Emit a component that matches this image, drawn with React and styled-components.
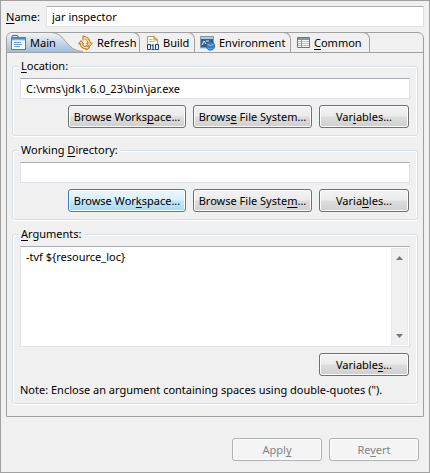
import React from "react";
import styled, { createGlobalStyle, css } from "styled-components";

const GlobalStyle = createGlobalStyle`
  *, *::before, *::after { box-sizing: border-box; }
  body {
    margin: 0;
    background: #f0f0f0;
    color: #000;
    font: 11px/16px "Noto Sans", "Open Sans", sans-serif;
  }
  button, input, textarea { font: inherit; color: inherit; }
`;

const Dialog = styled.form`
  display: flex;
  flex-direction: column;
  min-height: 100vh;
  padding: 5px;
  border: 1px solid #a0a0a0;
  background: #f0f0f0;
`;

const NameRow = styled.div`
  display: flex;
  align-items: center;
  gap: 4px;
`;

const NameLabel = styled.label`
  min-width: 36px;
`;

const field = css`
  border: 1px solid #e2e3ea;
  border-top-color: #abadb3;
  border-right-color: #dbdfe6;
  background: #fff;
  outline: none;
`;

const TextField = styled.input`
  ${field}
  display: block;
  flex: 1;
  width: 100%;
  min-width: 0;
  height: 21px;
  padding: 0 5px;
`;

const Key = styled.span`
  text-decoration: underline;
  text-decoration-skip-ink: none;
  text-decoration-thickness: 1px;
  text-underline-offset: 2px;
`;

const Folder = styled.section`
  margin-top: 5px;
  border: 1px solid #a0a0a0;
  border-radius: 6px 6px 0 0;
`;

const TabList = styled.div`
  display: flex;
  height: 20px;
  border-bottom: 1px solid #a0a0a0;
`;

const Tab = styled.button`
  display: flex;
  align-items: center;
  gap: 4px;
  width: ${(p) => p.$width}px;
  margin-top: -1px;
  padding: 1px 0 0 ${(p) => p.$inset}px;
  border: 0 solid #a0a0a0;
  border-width: 1px 1px 0 0;
  border-top-right-radius: 7px;
  background: none;
  white-space: nowrap;

  & svg { flex: none; }
`;

const ActiveTab = styled(Tab)`
  position: relative;
  border-color: transparent;
`;

const TabShape = styled.svg`
  position: absolute;
  left: 0;
  top: -1px;
`;

const TabFace = styled.span`
  position: relative;
  display: flex;
  align-items: center;
  gap: 4px;
`;

const Panel = styled.div`
  display: flex;
  flex-direction: column;
  gap: 6px;
  padding: 5px 5px 12px;
`;

const Group = styled.fieldset`
  min-width: 0;
  margin: 0;
  padding: 4px 7px 7px;
  border: 1px solid #d5dfe5;
  border-radius: 3px;
  box-shadow: inset 1px 1px #fff, inset -1px 0 #fff, 0 1px #fff;
`;

const Legend = styled.legend`
  padding: 0 2px;
  margin-left: -1px;
  background: #f0f0f0;
`;

const ButtonRow = styled.div`
  display: flex;
  justify-content: flex-end;
  gap: 7px;
  margin: 6px 1px 0 0;
`;

const PushButton = styled.button`
  width: ${(p) => p.$width || 90}px;
  height: 23px;
  padding: 0;
  border: 1px solid #707070;
  border-radius: 3px;
  background: linear-gradient(#f2f2f2, #ebebeb 48%, #dddddd 52%, #cfcfcf);
  box-shadow: inset 0 0 0 1px #fcfcfc;
  white-space: nowrap;

  ${(p) =>
    p.$hot &&
    css`
      border-color: #3c7fb1;
      background: linear-gradient(#eaf6fd, #d9f0fc 48%, #bee6fd 52%, #a7d9f5);
    `}

  &:disabled {
    border-color: #adb2b5;
    background: #f4f4f4;
    color: #838383;
  }
`;

const ArgumentsBox = styled.div`
  ${field}
  display: flex;
  height: 101px;
  padding: 1px;
`;

const ArgumentsInput = styled.textarea`
  flex: 1;
  min-width: 0;
  padding: 1px 4px;
  border: 0;
  outline: none;
  resize: none;
  overflow: hidden;
  background: transparent;
`;

const ScrollTrack = styled.div`
  display: flex;
  flex-direction: column;
  justify-content: space-between;
  width: 17px;
  border: 1px solid #e9e9e9;
  background: #f0f0f0;
`;

const ScrollButton = styled.button`
  display: grid;
  place-items: center;
  height: 17px;
  padding: 0;
  border: 0;
  background: none;
`;

const Note = styled.p`
  margin: 7px 0 0;
  line-height: 13px;
`;

const Footer = styled.footer`
  display: flex;
  justify-content: flex-end;
  gap: 7px;
  margin: 21px 5px 6px 0;
`;

const MainIcon = () => (
  <svg width="15" height="16" viewBox="0 0 15 16" aria-hidden="true">
    <path d="M1 3V1.500Q1 .5 2 .5h4q1 0 1 1V3" fill="#dcecf8" stroke="#3a6fa4" />
    <path d="M.5 2.500h14v12H.5z" fill="#f4f9fd" stroke="#5b7896" />
    <path d="M1 3h13v2H1z" fill="#4f91cb" />
    <path d="M1 5h13" stroke="#a9cde9" />
    <path d="M3 7.500h7M3 9.500h8M3 11.500h6" stroke="#6f9cc4" />
  </svg>
);

const RefreshIcon = () => (
  <svg width="15" height="16" viewBox="0 0 15 16" aria-hidden="true" fill="none" strokeLinejoin="round">
    <path d="M6 2.800Q10.300 3 11.300 8" stroke="#b47716" strokeWidth="3" />
    <path d="M5 5.500V.7L9 3M8.500 8h5.800l-3 3.800z" fill="#fbdc8b" stroke="#b47716" />
    <path d="M6 2.800Q10.300 3 11.300 8.800" stroke="#fbdc8b" strokeWidth="1.400" />
    <path d="M3.200 9Q4 13 9 12.600" stroke="#b47716" strokeWidth="3" />
    <path d="M.6 9h5.200L3 5.600zM8 10.300v4.800l3.600-2.500z" fill="#fbdc8b" stroke="#b47716" />
    <path d="M3.200 8.500Q4 13 9 12.600" stroke="#fbdc8b" strokeWidth="1.400" />
  </svg>
);

const BuildIcon = () => (
  <svg width="12" height="15" viewBox="0 0 12 15" aria-hidden="true">
    <path d="M.5 9V.5H7l3.500 3.500V9" fill="#fffdf4" stroke="#b79b50" />
    <path d="M7 .5V4h3.500z" fill="#e8c978" stroke="#b79b50" />
    <path d="M2.500 3.500h3M2.500 5.500h5" stroke="#9eb5d1" />
    <path d="M0 7.500h12V15H0z" fill="#e8edf3" />
    <path d="M.5 8.500h3v5h-3zM8.500 8.500" fill="none" stroke="#1d4476" />
    <path d="M6 8v6M4.500 9.500H6M4.500 13.500h3M8.500 8.500h3v5h-3z" fill="none" stroke="#1d4476" />
  </svg>
);

const EnvironmentIcon = () => (
  <svg width="15" height="15" viewBox="0 0 15 15" aria-hidden="true">
    <path d="M.5.500h13v11H.5z" fill="#33618f" stroke="#8498ae" />
    <path d="M1 1h12v2H1z" fill="#acc8e3" />
    <path d="M2 9l2-4 2 3M6 5h3" fill="none" stroke="#eef5fb" />
    <path d="M0 12.500h7" stroke="#c9d8e6" />
    <circle cx="10.500" cy="10" r="4.200" fill="#3c80c4" stroke="#24558b" strokeWidth=".7" />
    <path d="M7.500 8.500q3 1.800 6 0" stroke="#95c4ea" fill="none" />
    <path d="M8 12.500q2.500 1 5 0" stroke="#6aa6dc" fill="none" />
  </svg>
);

const CommonIcon = () => (
  <svg width="13" height="12" viewBox="0 0 13 12" aria-hidden="true">
    <path d="M.5.500h12v10H.5z" fill="#fff" stroke="#66758a" />
    <path d="M1 1h11v2H1z" fill="#8596aa" />
    <path d="M1 4.500h11M1 6.500h11M1 8.500h11" stroke="#b5c0cb" />
    <path d="M4.500 3v7" stroke="#8d9bad" />
  </svg>
);

const Arrow = ({ down }) => (
  <svg width="7" height="4" viewBox="0 0 7 4" aria-hidden="true">
    <path d={down ? "M0 0h7L3.500 4z" : "M0 4h7L3.500 0z"} fill="#777" />
  </svg>
);

export default function App() {
  return (
    <>
      <GlobalStyle />
      <Dialog onSubmit={(e) => e.preventDefault()}>
        <NameRow>
          <NameLabel htmlFor="name"><Key>N</Key>ame:</NameLabel>
          <TextField id="name" defaultValue="jar inspector" />
        </NameRow>

        <Folder>
          <TabList role="tablist">
            <ActiveTab type="button" role="tab" aria-selected="true" $width={67} $inset={4}>
              <TabShape width="78" height="20" viewBox="0 0 78 20" aria-hidden="true">
                <defs>
                  <linearGradient id="tabFill" x2="0" y2="1">
                    <stop offset="0" stopColor="#f0f3f7" />
                    <stop offset="1" stopColor="#9fbddb" />
                  </linearGradient>
                </defs>
                <path d="M0 20V6Q1 1 6 1H44C59 1 58 19 76 20Z" fill="url(#tabFill)" />
                <path d="M44 .5C59 .5 58 19 76 19.500" fill="none" stroke="#a0a0a0" />
              </TabShape>
              <TabFace><MainIcon />Main</TabFace>
            </ActiveTab>
            <Tab type="button" role="tab" aria-selected="false" $width={66} $inset={4}>
              <RefreshIcon />Refresh
            </Tab>
            <Tab type="button" role="tab" aria-selected="false" $width={55} $inset={7}>
              <BuildIcon />Build
            </Tab>
            <Tab type="button" role="tab" aria-selected="false" $width={96} $inset={5}>
              <EnvironmentIcon />Environment
            </Tab>
            <Tab type="button" role="tab" aria-selected="false" $width={79} $inset={6}>
              <CommonIcon /><span><Key>C</Key>ommon</span>
            </Tab>
          </TabList>

          <Panel role="tabpanel" aria-label="Main">
            <Group>
              <Legend><label htmlFor="location"><Key>L</Key>ocation:</label></Legend>
              <TextField id="location" defaultValue="C:\vms\jdk1.6.0_23\bin\jar.exe" />
              <ButtonRow>
                <PushButton type="button" $width={118}>Browse Works<Key>p</Key>ace...</PushButton>
                <PushButton type="button" $width={119}>Brows<Key>e</Key> File System...</PushButton>
                <PushButton type="button">Var<Key>i</Key>ables...</PushButton>
              </ButtonRow>
            </Group>

            <Group>
              <Legend><label htmlFor="directory">Working <Key>D</Key>irectory:</label></Legend>
              <TextField id="directory" />
              <ButtonRow>
                <PushButton type="button" $width={118} $hot>Browse Wor<Key>k</Key>space...</PushButton>
                <PushButton type="button" $width={119}>Browse File Syste<Key>m</Key>...</PushButton>
                <PushButton type="button">Varia<Key>b</Key>les...</PushButton>
              </ButtonRow>
            </Group>

            <Group>
              <Legend><label htmlFor="arguments"><Key>A</Key>rguments:</label></Legend>
              <ArgumentsBox>
                <ArgumentsInput id="arguments" defaultValue="-tvf ${resource_loc}" />
                <ScrollTrack>
                  <ScrollButton type="button" aria-label="Scroll up"><Arrow /></ScrollButton>
                  <ScrollButton type="button" aria-label="Scroll down"><Arrow down /></ScrollButton>
                </ScrollTrack>
              </ArgumentsBox>
              <ButtonRow>
                <PushButton type="button">Variable<Key>s</Key>...</PushButton>
              </ButtonRow>
              <Note>Note: Enclose an argument containing spaces using double-quotes (").</Note>
            </Group>
          </Panel>
        </Folder>

        <Footer>
          <PushButton type="button" disabled>Appl<Key>y</Key></PushButton>
          <PushButton type="submit" disabled>Re<Key>v</Key>ert</PushButton>
        </Footer>
      </Dialog>
    </>
  );
}
